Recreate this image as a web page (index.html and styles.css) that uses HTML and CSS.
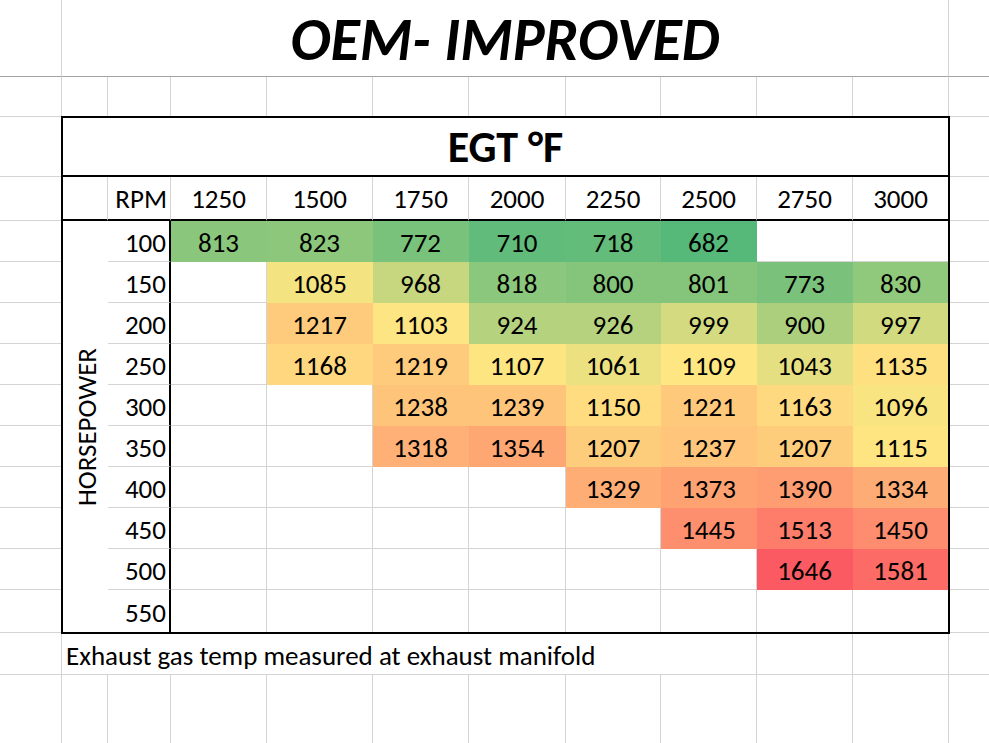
FILE: index.html
```html
<!DOCTYPE html>
<html lang="en">
<head>
<meta charset="utf-8">
<title>OEM- IMPROVED</title>
<link rel="stylesheet" href="styles.css">
</head>
<body>
<div class="sheet">
  <!-- row 1 -->
  <div class="c r1"></div>
  <div class="c r1 title">OEM- IMPROVED</div>
  <div class="c r1 nr"></div>

  <!-- row 2 -->
  <div class="c"></div><div class="c"></div><div class="c"></div><div class="c"></div>
  <div class="c"></div><div class="c"></div><div class="c"></div><div class="c"></div>
  <div class="c"></div><div class="c"></div><div class="c"></div><div class="c nr"></div>

  <!-- EGT table -->
  <div class="egt">
    <div class="egt-head">EGT °F</div>

    <div class="hc"></div>
    <div class="hc rpm">RPM</div>
    <div class="hc">1250</div>
    <div class="hc">1500</div>
    <div class="hc">1750</div>
    <div class="hc">2000</div>
    <div class="hc">2250</div>
    <div class="hc">2500</div>
    <div class="hc">2750</div>
    <div class="hc e">3000</div>

    <div class="hp"><span>HORSEPOWER</span></div>

    <div class="rl">100</div>
    <div class="d f" style="background:#8AC67C">813</div>
    <div class="d f" style="background:#8DC77C">823</div>
    <div class="d f" style="background:#79C27B">772</div>
    <div class="d f" style="background:#61BB7A">710</div>
    <div class="d f" style="background:#64BC7A">718</div>
    <div class="d f" style="background:#56B879">682</div>
    <div class="d"></div>
    <div class="d e"></div>

    <div class="rl">150</div>
    <div class="d"></div>
    <div class="d f" style="background:#F4E381">1085</div>
    <div class="d f" style="background:#C6D77F">968</div>
    <div class="d f" style="background:#8BC77C">818</div>
    <div class="d f" style="background:#84C57B">800</div>
    <div class="d f" style="background:#85C57B">801</div>
    <div class="d f" style="background:#7AC27B">773</div>
    <div class="d f e" style="background:#90C87C">830</div>

    <div class="rl">200</div>
    <div class="d"></div>
    <div class="d f" style="background:#FECB7C">1217</div>
    <div class="d f" style="background:#FCE582">1103</div>
    <div class="d f" style="background:#B5D27E">924</div>
    <div class="d f" style="background:#B6D27E">926</div>
    <div class="d f" style="background:#D3DA80">999</div>
    <div class="d f" style="background:#ACCF7E">900</div>
    <div class="d f e" style="background:#D2DA80">997</div>

    <div class="rl">250</div>
    <div class="d"></div>
    <div class="d f" style="background:#FFD77F">1168</div>
    <div class="d f" style="background:#FECA7C">1219</div>
    <div class="d f" style="background:#FDE582">1107</div>
    <div class="d f" style="background:#EBE181">1061</div>
    <div class="d f" style="background:#FEE682">1109</div>
    <div class="d f" style="background:#E4DF81">1043</div>
    <div class="d f e" style="background:#FFE081">1135</div>

    <div class="rl">300</div>
    <div class="d"></div>
    <div class="d"></div>
    <div class="d f" style="background:#FEC57A">1238</div>
    <div class="d f" style="background:#FEC57A">1239</div>
    <div class="d f" style="background:#FFDC80">1150</div>
    <div class="d f" style="background:#FEC97B">1221</div>
    <div class="d f" style="background:#FFD97F">1163</div>
    <div class="d f e" style="background:#F9E482">1096</div>

    <div class="rl">350</div>
    <div class="d"></div>
    <div class="d"></div>
    <div class="d f" style="background:#FEB076">1318</div>
    <div class="d f" style="background:#FEA773">1354</div>
    <div class="d f" style="background:#FECD7C">1207</div>
    <div class="d f" style="background:#FEC57B">1237</div>
    <div class="d f" style="background:#FECD7C">1207</div>
    <div class="d f e" style="background:#FFE582">1115</div>

    <div class="rl">400</div>
    <div class="d"></div>
    <div class="d"></div>
    <div class="d"></div>
    <div class="d"></div>
    <div class="d f" style="background:#FEAD75">1329</div>
    <div class="d f" style="background:#FEA272">1373</div>
    <div class="d f" style="background:#FD9D71">1390</div>
    <div class="d f e" style="background:#FEAC75">1334</div>

    <div class="rl">450</div>
    <div class="d"></div>
    <div class="d"></div>
    <div class="d"></div>
    <div class="d"></div>
    <div class="d"></div>
    <div class="d f" style="background:#FD8F6E">1445</div>
    <div class="d f" style="background:#FD7D6A">1513</div>
    <div class="d f e" style="background:#FD8D6E">1450</div>

    <div class="rl">500</div>
    <div class="d"></div>
    <div class="d"></div>
    <div class="d"></div>
    <div class="d"></div>
    <div class="d"></div>
    <div class="d"></div>
    <div class="d f" style="background:#FC5A62">1646</div>
    <div class="d f e" style="background:#FC6B66">1581</div>

    <div class="rl lr">550</div>
    <div class="d lr"></div>
    <div class="d lr"></div>
    <div class="d lr"></div>
    <div class="d lr"></div>
    <div class="d lr"></div>
    <div class="d lr"></div>
    <div class="d lr"></div>
    <div class="d e lr"></div>
  </div>

  <!-- side columns for rows 3-14 (A, L pairs) -->
  <div class="c"></div><div class="c nr"></div>
  <div class="c"></div><div class="c nr"></div>
  <div class="c"></div><div class="c nr"></div>
  <div class="c"></div><div class="c nr"></div>
  <div class="c"></div><div class="c nr"></div>
  <div class="c"></div><div class="c nr"></div>
  <div class="c"></div><div class="c nr"></div>
  <div class="c"></div><div class="c nr"></div>
  <div class="c"></div><div class="c nr"></div>
  <div class="c"></div><div class="c nr"></div>
  <div class="c"></div><div class="c nr"></div>
  <div class="c"></div><div class="c nr"></div>

  <!-- row 15 -->
  <div class="c"></div>
  <div class="c note">Exhaust gas temp measured at exhaust manifold</div>
  <div class="c"></div>
  <div class="c"></div>
  <div class="c nr"></div>

  <!-- row 16 -->
  <div class="c nb"></div><div class="c nb"></div><div class="c nb"></div><div class="c nb"></div>
  <div class="c nb"></div><div class="c nb"></div><div class="c nb"></div><div class="c nb"></div>
  <div class="c nb"></div><div class="c nb"></div><div class="c nb"></div><div class="c nb nr"></div>
</div>
</body>
</html>
```

FILE: styles.css
```css
* {
  box-sizing: border-box;
  margin: 0;
  padding: 0;
}

html, body {
  background: #fff;
}

body {
  margin: 0;
  font-family: Carlito, Calibri, Lato, "Liberation Sans", sans-serif;
  color: #000;
  overflow: hidden;
}

.sheet {
  display: grid;
  width: 989px;
  height: 743px;
  grid-template-columns: 62px 46px 63px 96px 106px 96px 97px 95px 96px 96px 96px 1fr;
  grid-template-rows: 77px 40px 60px 44px repeat(9, 41px) 43px 42px 1fr;
}

.c {
  border-right: 1px solid #d4d4d4;
  border-bottom: 1px solid #d4d4d4;
}

.c.nr {
  border-right: none;
}

.c.nb {
  border-bottom: none;
}

.r1 {
  border-bottom-color: #a3a3a3;
}

.title {
  grid-column: 2 / 12;
  display: flex;
  align-items: center;
  justify-content: center;
  font-size: 60px;
  font-weight: 700;
  font-style: italic;
  padding-top: 2px;
}

.note {
  grid-column: 2 / 10;
  display: flex;
  align-items: center;
  padding-left: 4px;
  padding-top: 3px;
  font-size: 27px;
  white-space: nowrap;
}

/* EGT table */
.egt {
  grid-column: 2 / 12;
  grid-row: 3 / 15;
  margin: -1px;
  z-index: 1;
  border: 2px solid #000;
  background: #fff;
  display: grid;
  grid-template-columns: 45px 63px 96px 106px 96px 97px 95px 96px 96px 95px;
  grid-template-rows: 59px 44px repeat(9, 41px) 42px;
  font-size: 27px;
}

.egt-head {
  grid-column: 1 / -1;
  border-bottom: 2px solid #000;
  display: flex;
  align-items: center;
  justify-content: center;
  font-size: 44px;
  font-weight: 700;
}

.hc {
  border-right: 1px solid #d4d4d4;
  border-bottom: 2px solid #000;
  display: flex;
  align-items: center;
  justify-content: center;
}

.hc.rpm {
  justify-content: flex-end;
  padding-right: 3px;
}

.hc.e {
  border-right: none;
}

.hp {
  grid-column: 1;
  grid-row: 3 / span 10;
  display: flex;
  align-items: center;
  justify-content: center;
  padding-left: 1px;
}

.hp span {
  writing-mode: vertical-rl;
  transform: rotate(180deg);
}

.rl {
  border-right: 2px solid #000;
  border-bottom: 1px solid #d4d4d4;
  display: flex;
  align-items: center;
  justify-content: flex-end;
  padding-right: 3px;
  padding-top: 3px;
}

.d {
  border-right: 1px solid #d4d4d4;
  border-bottom: 1px solid #d4d4d4;
  display: flex;
  align-items: center;
  justify-content: center;
  padding-top: 3px;
}

.d.f {
  border-color: transparent;
}

.d.e {
  border-right: none;
}

.lr {
  border-bottom: none;
}
```
